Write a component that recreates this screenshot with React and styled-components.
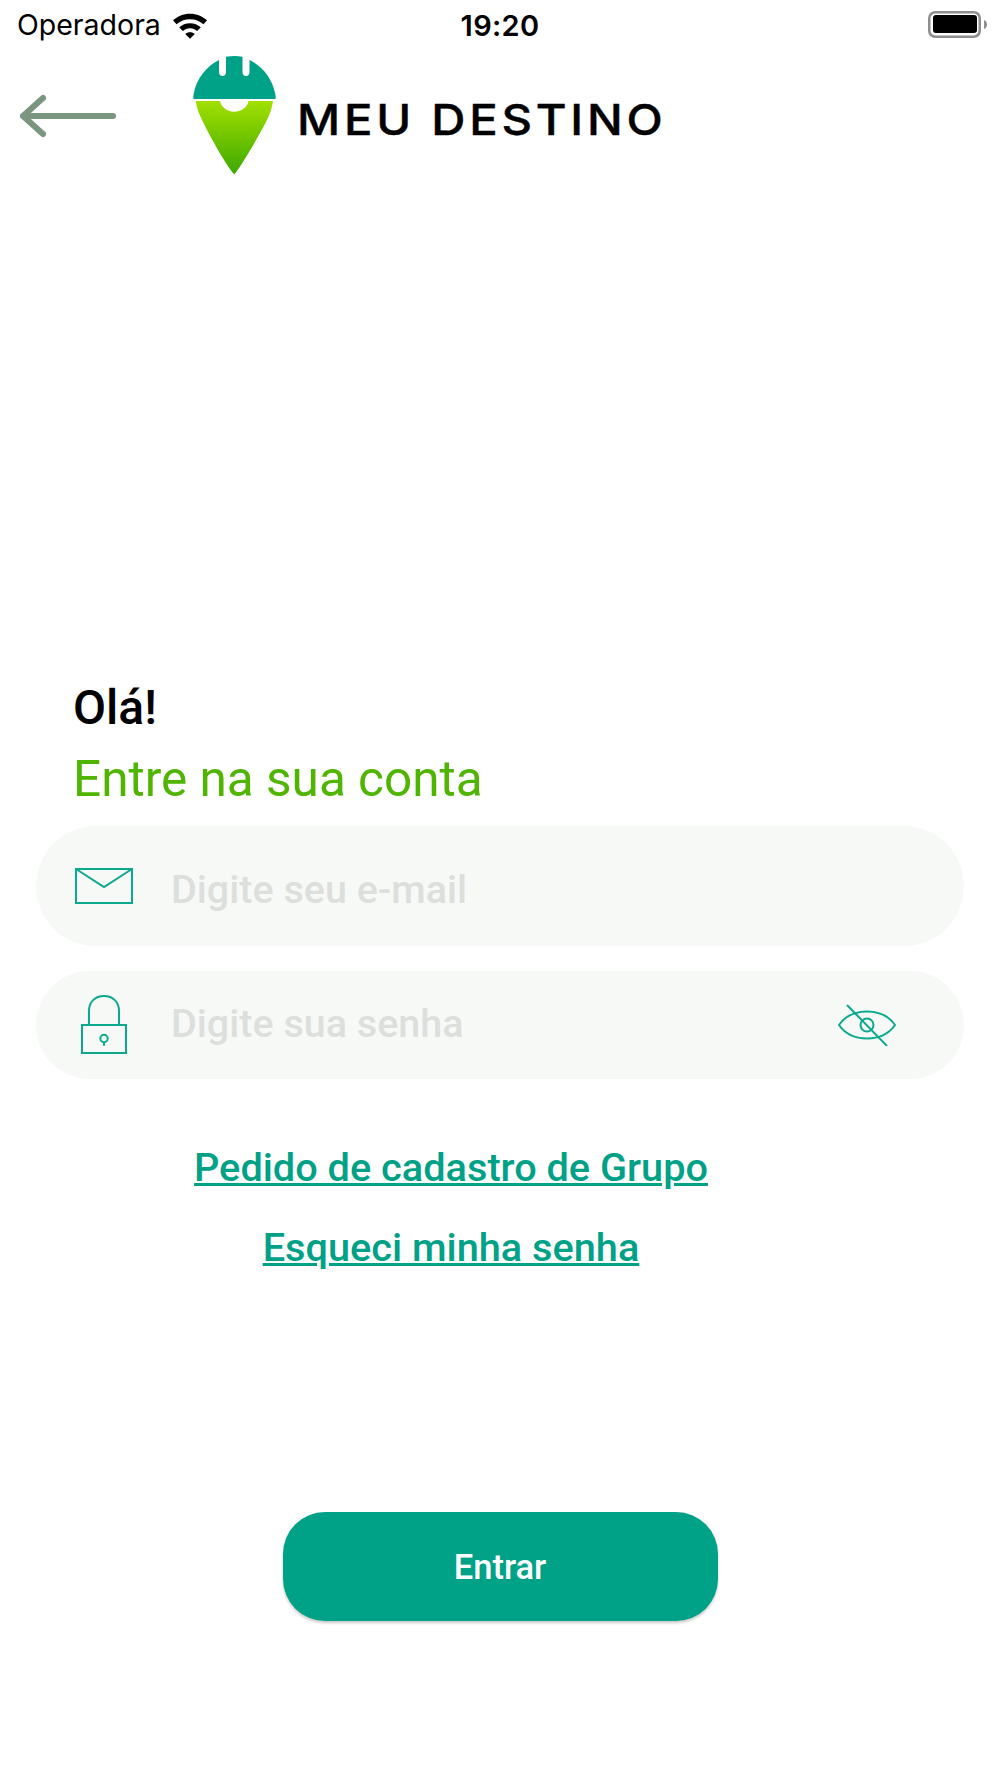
import React from "react";
import styled, { createGlobalStyle } from "styled-components";

const Global = createGlobalStyle`
  html, body { margin: 0; padding: 0; background: #fff; }
  * { box-sizing: border-box; }
`;
const Page = styled.div`
  width: 1000px; height: 1778px; display: flex; flex-direction: column;
  background: #fff; font-family: Roboto, sans-serif; overflow: hidden;
`;
const StatusBar = styled.div`
  height: 50px; display: grid; grid-template-columns: 1fr auto 1fr; align-items: center;
  padding: 0 13px; font-family: Inter, sans-serif; color: #000;
`;
const StatusLeft = styled.div`
  display: flex; align-items: center; gap: 11px; padding-left: 4px; font-size: 28.500px; line-height: 50px;
`;
const Clock = styled.div`font-size: 29px; font-weight: 600; letter-spacing: 0.3px;`;
const StatusRight = styled.div`display: flex; justify-content: flex-end;`;
const Header = styled.div`
  display: flex; align-items: flex-start; padding-left: 17px; height: 126px;
`;
const BackIcon = styled.svg`margin-top: 42px; flex: none;`;
const Pin = styled.svg`margin-left: 76px; margin-top: 6px; flex: none;`;
const Brand = styled.div`
  margin-left: 21px; margin-top: 44px; font-family: Inter, sans-serif; font-weight: 500;
  font-size: 43px; line-height: 50px; letter-spacing: 3.400px; color: #000; white-space: nowrap;
  -webkit-text-stroke: 0.4px #000;
  transform: scaleX(1.1); transform-origin: left center;
`;
const Main = styled.div`
  display: flex; flex-direction: column; padding: 499px 36px 0;
`;
const Hello = styled.h1`
  margin: 0 0 0 37px; font-size: 48px; line-height: 66px; font-weight: 500; color: #000;
`;
const Sub = styled.h2`
  margin: 5px 0 0 37px; font-size: 49.500px; line-height: 66px; font-weight: 400; color: #4fb500;
`;
const Field = styled.div`
  height: ${p => p.$h}px; margin-top: ${p => p.$mt}px; background: #f7f9f7; border-radius: 60px;
  display: flex; align-items: center;
`;
const IconSlot = styled.div`
  width: 136px; padding-left: 39px; flex: none; display: flex; align-items: center;
`;
const Placeholder = styled.div`
  font-size: 39.500px; font-weight: 500; color: #dddfdd; flex: 1; margin-left: -1px;
  padding-top: ${p => p.$pt || 0}px; padding-bottom: ${p => p.$pb || 0}px;
`;
const EyeSlot = styled.div`margin-right: 68px; display: flex;`;
const Links = styled.div`
  display: flex; flex-direction: column; align-items: center; margin-top: 67px; padding-right: 98px;
`;
const LinkText = styled.a`
  font-size: 39.700px; line-height: 44px; font-weight: 500; color: #00a186; text-decoration: underline;
  margin-bottom: ${p => p.$mb || 0}px;
`;
const Submit = styled.button`
  align-self: center; margin-top: 242px; width: 435px; height: 109px; border: 0; border-radius: 42px;
  background: #00a287; color: #fff; font-family: Roboto, sans-serif; font-size: 34.500px; font-weight: 500;
  box-shadow: 0 2px 3px rgba(0,0,0,.22);
`;

const teal = "#0ca98f";

export default function App() {
  return (
    <Page>
      <Global />
      <StatusBar>
        <StatusLeft>
          <span>Operadora</span>
          <svg width="36" height="27" viewBox="0 0 38 28">
            <path d="M19 1.500c6.900 0 13.300 2.700 18 7l-3.800 4.200C29.400 9.300 24.500 7.300 19 7.300S8.600 9.300 4.800 12.700L1 8.500C5.700 4.200 12.100 1.500 19 1.500z" fill="#000" />
            <path d="M19 11.500c4.400 0 8.400 1.700 11.400 4.400l-3.800 4c-2-1.800-4.700-3-7.600-3s-5.600 1.200-7.600 3l-3.800-4c3-2.700 7-4.400 11.400-4.400z" fill="#000" />
            <path d="M19 21c1.900 0 3.700.7 5 1.900l-5 5.100-5-5.100c1.300-1.200 3.100-1.900 5-1.900z" fill="#000" />
          </svg>
        </StatusLeft>
        <Clock>19:20</Clock>
        <StatusRight>
          <svg width="60" height="30" viewBox="0 0 60 30">
            <rect x="2.250" y="2.250" width="50.500" height="24.500" rx="6" fill="none" stroke="#8e8e8e" strokeWidth="2.500" />
            <rect x="6" y="5" width="44" height="18" rx="3" fill="#000" />
            <path d="M57 10c2 .6 3 2.500 3 4.500s-1 3.900-3 4.500z" fill="#8e8e8e" />
          </svg>
        </StatusRight>
      </StatusBar>
      <Header>
        <BackIcon width="100" height="48" viewBox="0 0 100 48">
          <path d="M26 6 6 24l20 18M6 24h90" fill="none" stroke="#7a9580" strokeWidth="6" strokeLinecap="round" strokeLinejoin="round" />
        </BackIcon>
        <Pin width="83" height="119" viewBox="0 0 83 119">
          <defs>
            <linearGradient id="pinGrad" x1="0" y1="0" x2="0" y2="1">
              <stop offset="0" stopColor="#a2e000" />
              <stop offset="1" stopColor="#3da800" />
            </linearGradient>
          </defs>
          <path d="M.500 43h82c.3-1 .2-3-.3-5.500C79 22 69 10 56.500 4v12c0 2.500-1.500 4-3.500 4s-3.500-1.500-3.500-4V.8C44-.2 39-.2 33 .8V16c0 2.500-1.500 4-3.500 4S26 18.500 26 16V4C14 10 3.500 22 .8 37.500c-.5 2.500-.6 4.500-.3 5.500z" fill="#00a287" />
          <path d="M2.700 45H27c1.200 6 6.800 10.700 14.300 10.700S54.400 51 55.600 45H80c-1 7-3 13-7 21-6 11.500-22 40-31.700 52.500C31 106 15.500 77.500 10 66 6 58 3.700 52 2.700 45z" fill="url(#pinGrad)" />
        </Pin>
        <Brand>MEU DESTINO</Brand>
      </Header>
      <Main>
        <Hello>Olá!</Hello>
        <Sub>Entre na sua conta</Sub>
        <Field $h={120} $mt={14}>
          <IconSlot>
            <svg width="58" height="36" viewBox="0 0 58 36" fill="none" stroke={teal} strokeWidth="2">
              <rect x="1" y="1" width="56" height="34" />
              <path d="M1 1l28 18L57 1" />
            </svg>
          </IconSlot>
          <Placeholder $pt={6}>Digite seu e-mail</Placeholder>
        </Field>
        <Field $h={108} $mt={25}>
          <IconSlot>
            <svg width="58" height="60" viewBox="0 0 58 60" fill="none" stroke={teal} strokeWidth="2">
              <path d="M14 30V16C14 7 20 1 29 1s15 6 15 15v14" />
              <rect x="7" y="30" width="44" height="28" />
              <circle cx="29" cy="43.500" r="3.700" />
              <path d="M29 47.200v3.500" />
            </svg>
          </IconSlot>
          <Placeholder $pb={4}>Digite sua senha</Placeholder>
          <EyeSlot>
            <svg width="58" height="42" viewBox="0 0 58 42" fill="none" stroke={teal} strokeWidth="2">
              <path d="M1 21C8 11 18 7.500 29 7.500S50 11 57 21c-7 10-17 13.500-28 13.500S8 31 1 21z" />
              <circle cx="29" cy="21" r="6.500" />
              <path d="M9 1l40 41" />
            </svg>
          </EyeSlot>
        </Field>
        <Links>
          <LinkText $mb={36}>Pedido de cadastro de Grupo</LinkText>
          <LinkText>Esqueci minha senha</LinkText>
        </Links>
        <Submit>Entrar</Submit>
      </Main>
    </Page>
  );
}
